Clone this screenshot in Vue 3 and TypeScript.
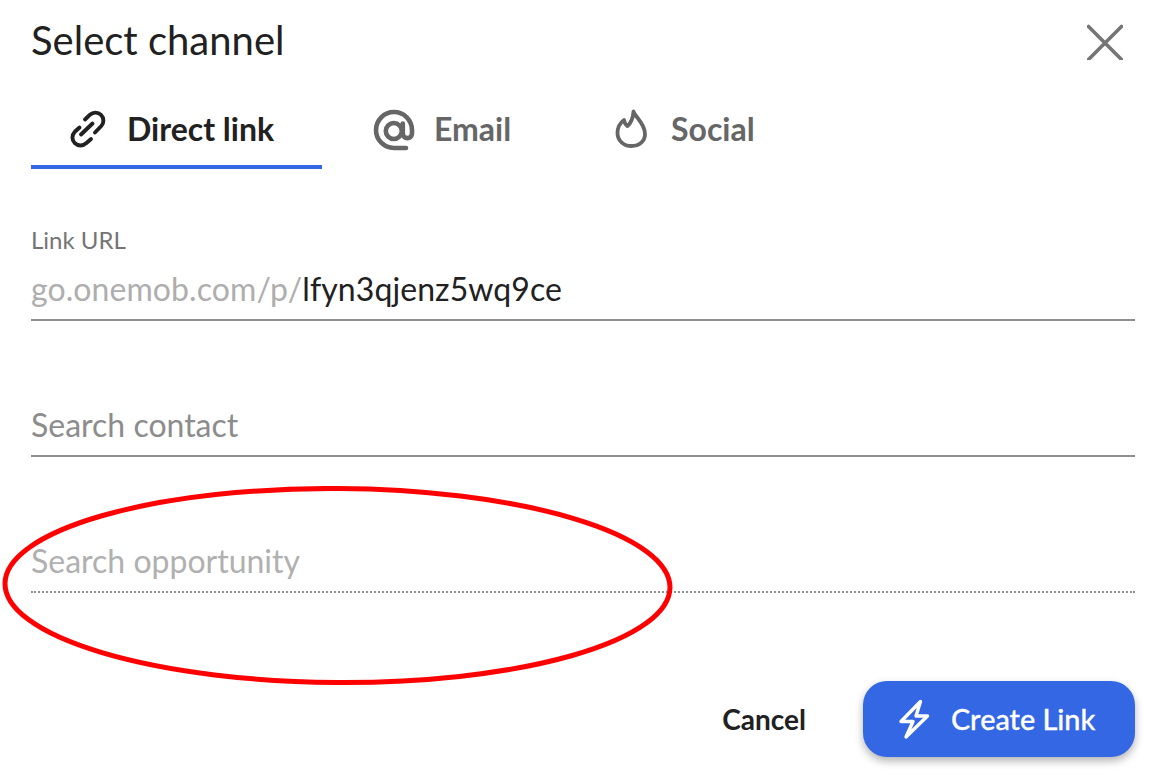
<script setup lang="ts">
const tabs = [
  { id: 'direct', label: 'Direct link', active: true },
  { id: 'email', label: 'Email', active: false },
  { id: 'social', label: 'Social', active: false },
]
</script>

<template>
  <div class="dialog">
    <header class="head">
      <h1 class="title">Select channel</h1>
      <button class="close" aria-label="Close">
        <svg width="36" height="36" viewBox="0 0 36 36"><path d="M1.500 2.500 34.500 35.500M34.500 2.500 1.500 35.500" stroke="#757575" stroke-width="3.6" stroke-linecap="round" fill="none" /></svg>
      </button>
    </header>

    <nav class="tabs">
      <div v-for="t in tabs" :key="t.id" class="tab" :class="[t.id, { active: t.active }]">
        <svg v-if="t.id === 'direct'" class="ic" width="54" height="50" viewBox="0 0 54 50" fill="none" stroke="#212121" stroke-width="3.9" stroke-linecap="round" stroke-linejoin="round">
          <path d="M25 15.500 30 10.700A8 8 0 0 1 41.300 22L35 28.500" />
          <path d="M19.500 23.500 14.800 27.800A8 8 0 0 0 26.200 39.200L31 35" />
          <path d="M21 30.500 32.500 19.500" />
        </svg>
        <svg v-else-if="t.id === 'email'" class="ic" width="56" height="54" viewBox="0 0 56 54" fill="none" stroke="#666" stroke-width="4.6" stroke-linecap="round">
          <path d="M40 46H28A18 18 0 1 1 46 28V31.500A4.600 4.600 0 0 1 36.800 31.500V21.500" />
          <circle cx="27.800" cy="29" r="8" />
        </svg>
        <svg v-else class="ic" width="50" height="54" viewBox="0 0 50 54" fill="none" stroke="#666" stroke-width="3.8" stroke-linejoin="round" stroke-linecap="round">
          <path d="M27.500 9.500C29 15 39 21 39 32C39 39 33.500 44 25.500 44C17.500 44 11.500 38.500 11.500 31C11.500 25 14 21 18 18C18.500 21 19 22.500 21.500 24C25 21 27 16 27.500 9.500Z" />
        </svg>
        <span class="label">{{ t.label }}</span>
      </div>
    </nav>

    <section class="fields">
      <div class="field url">
        <div class="cap">Link URL</div>
        <div class="value"><span class="prefix">go.onemob.com/p/</span><span class="slug">lfyn3qjenz5wq9ce</span></div>
      </div>
      <div class="field contact">
        <div class="value"><span class="ph">Search contact</span></div>
      </div>
      <div class="field opp">
        <div class="value"><span class="ph dim">Search opportunity</span></div>
      </div>
    </section>

    <footer class="actions">
      <button class="cancel">Cancel</button>
      <button class="create">
        <svg class="bolt" width="50" height="50" viewBox="0 0 50 50" fill="none" stroke="#fff" stroke-width="3.4" stroke-linejoin="round" stroke-linecap="round"><path d="M30.500 6.500 11 26.500H23L16 42 37.500 21H26Z" /></svg>
        <span>Create Link</span>
      </button>
    </footer>

    <svg class="scribble" width="680" height="204" viewBox="0 0 680 204" fill="none"><ellipse cx="337.500" cy="99.500" rx="332.500" ry="97" transform="rotate(0.34 337.500 99.500)" stroke="#ff0000" stroke-width="5" /></svg>
  </div>
</template>

<style>
body { margin: 0; background: #fff; }
</style>

<style scoped>
.dialog {
  position: relative;
  box-sizing: border-box;
  width: 1162px;
  height: 781px;
  padding: 0 27px 0 31px;
  overflow: hidden;
  background: #fff;
  font-family: Lato, "Liberation Sans", sans-serif;
  color: #212121;
  display: flex;
  flex-direction: column;
}
.head {
  display: flex;
  align-items: center;
  justify-content: space-between;
  height: 84px;
}
.title {
  margin: 0 0 4px;
  font-size: 40px;
  font-weight: 400;
  line-height: 76px;
}
.close {
  border: 0;
  background: none;
  padding: 0;
  margin-right: 12px;
  height: 36px;
  display: flex;
}
.tabs {
  display: flex;
  height: 85px;
}
.tab {
  box-sizing: border-box;
  display: flex;
  align-items: center;
  font-size: 32px;
  font-weight: 700;
  color: #666;
  padding-top: 13px;
  padding-bottom: 8px;
}
.tab.active {
  color: #212121;
  border-bottom: 4px solid #3367e4;
  padding-bottom: 4px;
}
.label { margin-bottom: 2px; }
.direct { width: 291px; padding-left: 29px; }
.email { width: 241px; padding-left: 44px; }
.social { width: 200px; padding-left: 43px; }
.ic { flex: none; }
.direct .ic { margin-right: 13px; }
.email .ic { margin-right: 12px; }
.social .ic { margin-right: 15px; }

.fields { display: flex; flex-direction: column; }
.field {
  box-sizing: border-box;
  height: 136px;
  display: flex;
  flex-direction: column;
  justify-content: flex-end;
  border-bottom: 2px solid #8e8e8e;
}
.field.url { height: 152px; }
.field.url .value { letter-spacing: 0.08px; }
.field.opp { border-bottom: 2px dotted #8e8e8e; }
.cap {
  font-size: 24px;
  line-height: 26px;
  color: #757575;
  margin-bottom: 14px;
}
.value {
  font-size: 32px;
  line-height: 44px;
  margin-bottom: 8px;
}
.prefix { color: #aeaeae; }
.slug { color: #212121; }
.ph { color: #8c8c8c; }
.ph.dim { color: #b0b0b0; }

.actions {
  display: flex;
  justify-content: flex-end;
  align-items: center;
  margin-top: 88px;
}
.cancel {
  border: 0;
  background: none;
  padding: 0;
  margin-right: 57px;
  font: 700 28px Lato, "Liberation Sans", sans-serif;
  color: #212121;
}
.create {
  box-sizing: border-box;
  width: 272px;
  height: 76px;
  border: 0;
  border-radius: 24px;
  padding: 0 0 0 27px;
  background: #3367e4;
  color: #fff;
  font: 500 28.800px Lato, "Liberation Sans", sans-serif;
  -webkit-text-stroke: 0.3px #fff;
  display: flex;
  align-items: center;
  box-shadow: 0 4px 8px rgba(0, 0, 0, 0.3);
}
.bolt { margin: 2px 11px 0 0; flex: none; }
.scribble {
  position: absolute;
  left: 0;
  top: 486px;
  pointer-events: none;
}
</style>
